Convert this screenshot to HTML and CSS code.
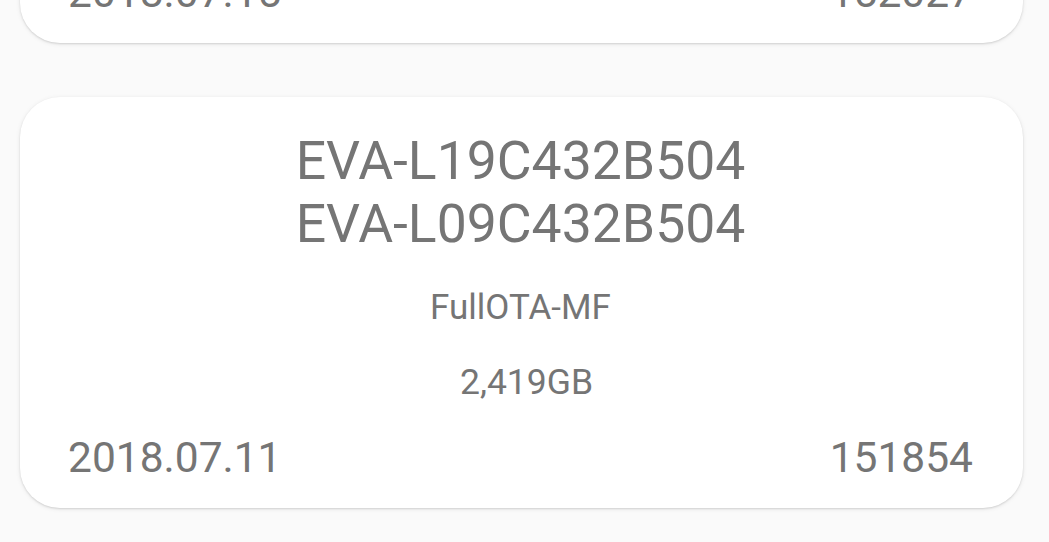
FILE: index.html
```html
<!DOCTYPE html>
<html lang="en">
<head>
<meta charset="utf-8">
<title>Firmware list</title>
<link rel="stylesheet" href="styles.css">
</head>
<body>
<div class="list">
  <div class="card">
    <div class="model">EVA-L19C432B505</div>
    <div class="model">EVA-L09C432B505</div>
    <div class="type">FullOTA-MF</div>
    <div class="size">2,419GB</div>
    <div class="meta">
      <span>2018.07.15</span>
      <span>152027</span>
    </div>
  </div>
  <div class="card">
    <div class="model">EVA-L19C432B504</div>
    <div class="model">EVA-L09C432B504</div>
    <div class="type">FullOTA-MF</div>
    <div class="size">2,419GB</div>
    <div class="meta">
      <span>2018.07.11</span>
      <span>151854</span>
    </div>
  </div>
</div>
</body>
</html>
```

FILE: styles.css
```css
html, body {
  margin: 0;
  padding: 0;
  background: #fafafa;
  font-family: Roboto, "Liberation Sans", sans-serif;
  color: #757575;
  overflow: hidden;
  height: 542px;
}

.list {
  display: flex;
  flex-direction: column;
  gap: 54px;
  padding: 0 26px 0 20px;
  margin-top: -368px;
}

.card {
  background: #ffffff;
  border-radius: 40px;
  box-shadow: 0 1px 2px rgba(0, 0, 0, 0.12), 0 1px 5px rgba(0, 0, 0, 0.08);
  padding: 32px 50px 25px 48px;
  display: flex;
  flex-direction: column;
  align-items: center;
  text-align: center;
  height: 411px;
  box-sizing: border-box;
}

.model {
  font-size: 53.5px;
  line-height: 63px;
}

.type {
  font-size: 35px;
  line-height: 40px;
  margin-top: 33px;
}

.size {
  font-size: 35.5px;
  line-height: 40px;
  margin-top: 34px;
  padding-left: 12px;
}

.meta {
  align-self: stretch;
  display: flex;
  justify-content: space-between;
  font-size: 42.5px;
  line-height: 50px;
  margin-top: 31px;
}
```
